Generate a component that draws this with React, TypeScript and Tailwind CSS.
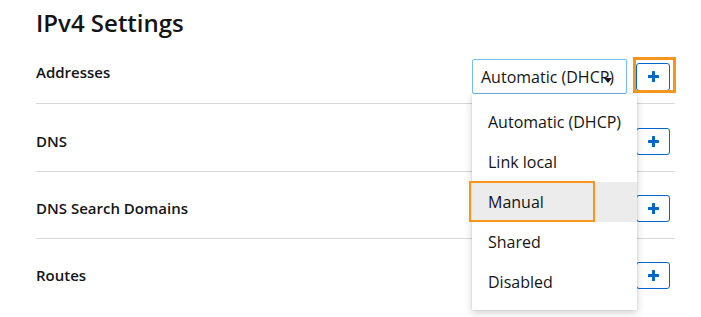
import React from 'react';

const font = { fontFamily: '"Open Sans", "Liberation Sans", sans-serif' };

const PlusIcon = () => (
  <svg width="11" height="11" viewBox="0 0 11 11" fill="#0066cc">
    <rect x="4" y="0" width="3" height="11" rx="0.5" />
    <rect x="0" y="4" width="11" height="3" rx="0.5" />
  </svg>
);

const AddButton = ({ highlight = false, tall = false }: { highlight?: boolean; tall?: boolean }) => (
  <button
    type="button"
    className={
      tall
        ? 'relative flex w-[34px] h-[28px] items-center justify-center rounded-[3px] border border-[#0066cc] bg-white'
        : 'relative flex w-[34px] h-[27px] items-center justify-center rounded-[3px] border border-[#0066cc] bg-white'
    }
  >
    <PlusIcon />
    {highlight && (
      <span className="pointer-events-none absolute -left-[4px] -right-[7px] -top-[7px] -bottom-[3px] border-[3px] border-[#f7951d]" />
    )}
  </button>
);

const options = ['Automatic (DHCP)', 'Link local', 'Manual', 'Shared', 'Disabled'];

// Выпадающий список методов адресации
const MethodMenu = () => (
  <ul className="absolute left-0 top-full z-10 w-[165px] bg-white py-2 shadow-[0_3px_8px_rgba(0,0,0,0.18),0_0_2px_rgba(0,0,0,0.12)]">
    {options.map((opt) => (
      <li
        key={opt}
        className={
          opt === 'Manual'
            ? 'relative flex h-10 items-center bg-[#ececec] pl-4 text-[16px] text-[#151515]'
            : 'relative flex h-10 items-center pl-4 text-[16px] text-[#151515]'
        }
      >
        {opt}
        {opt === 'Manual' && (
          <span className="pointer-events-none absolute -left-[3px] -top-[1px] h-[41px] w-[126px] border-2 border-[#f7951d]" />
        )}
      </li>
    ))}
  </ul>
);

export default function App() {
  return (
    <div className="h-[317px] w-[701px] overflow-hidden bg-white pl-9 pr-[26px] text-[#151515]" style={font}>
      <h1 className="flex h-[44px] items-center pt-[1px] text-[24px] font-semibold">IPv4 Settings</h1>

      {/* Addresses */}
      <div className="flex items-center justify-between border-b border-[#d8d8d8] pb-[9px] pr-[5px] pt-[15px]">
        <span className="mb-[10px] text-[15px] font-semibold leading-5">Addresses</span>
        <div className="flex items-center gap-[9px]">
          <div className="relative">
            <div className="relative flex h-[35px] w-[155px] items-center overflow-hidden whitespace-nowrap rounded-[2px] border border-[#73bcf7] pl-[8px] text-[16px]">
              Automatic (DHCP)
              <svg className="absolute left-[131px] top-[18px]" width="8" height="5" viewBox="0 0 8 5">
                <path d="M0 0h8L4 5z" fill="#151515" />
              </svg>
            </div>
            <MethodMenu />
          </div>
          <AddButton highlight tall />
        </div>
      </div>

      {/* DNS */}
      <div className="flex items-center justify-between border-b border-[#d8d8d8] pb-[16px] pr-[5px] pt-[24px]">
        <span className="mb-[1px] text-[15px] font-semibold leading-5">DNS</span>
        <AddButton />
      </div>

      {/* DNS Search Domains */}
      <div className="flex items-center justify-between border-b border-[#d8d8d8] pb-[16px] pr-[5px] pt-[23px]">
        <span className="mb-[1px] text-[15px] font-semibold leading-5">DNS Search Domains</span>
        <AddButton />
      </div>

      {/* Routes */}
      <div className="flex items-center justify-between pb-[16px] pr-[5px] pt-[23px]">
        <span className="mb-[1px] text-[15px] font-semibold leading-5">Routes</span>
        <AddButton />
      </div>
    </div>
  );
}
